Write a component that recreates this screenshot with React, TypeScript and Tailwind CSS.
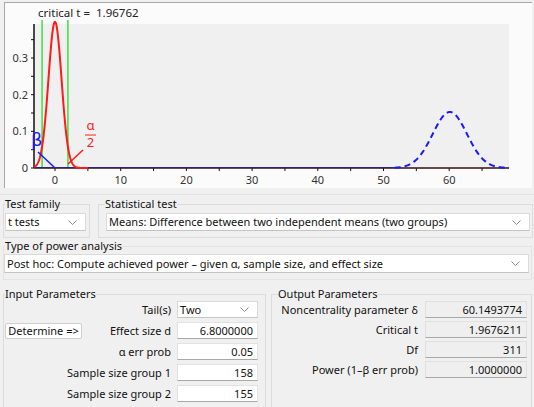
import React from 'react';

// plot mapping (page pixels)
const X = (t: number) => 55 + t * 6.57;
const Y = (p: number) => 168 - p * 366.7;

const DF = 311;
const centralPdf = (t: number) =>
  0.39894 * (1 - 1 / (4 * DF)) * Math.pow(1 + (t * t) / DF, -(DF + 1) / 2);

const ncPdf = (t: number) => {
  const m = 60.1;
  const s = 2.61;
  const z = (t - m) / s;
  return Math.exp((-z * z) / 2) / (s * 2.5066);
};

function curve(f: (t: number) => number, from: number, to: number, step = 0.05) {
  let d = '';
  for (let t = from; t <= to; t += step) {
    d += `${d ? 'L' : 'M'}${X(t).toFixed(2)},${Y(f(t)).toFixed(2)}`;
  }
  return d;
}

const redPath = curve(centralPdf, -3.2, 5);
const bluePath = curve(ncPdf, 51.7, 69.1);

const xTicks = Array.from({ length: 14 }, (_, i) => i * 5);
const yTicks = Array.from({ length: 8 }, (_, i) => i * 0.05);

function Chart() {
  return (
    <div className="ml-[4px] mt-[2px] w-[528px] h-[186px] border-l border-t border-[#a8a8a8] bg-[#fbfbfb]">
      <div className="h-[20px] pl-[33px] pt-[2px] text-[11.5px] leading-[15px] text-[#222] whitespace-pre">
        {'critical t =  1.96762'}
      </div>
      <svg width="527" height="165" viewBox="5 23 527 165" className="block overflow-visible">
        <rect x="34" y="24" width="475" height="144" fill="#f0f0f0" />

        {/* axes */}
        <line x1="34" y1="24" x2="34" y2="168" stroke="#111" strokeWidth="1.5" />
        {yTicks.map((p) => (
          <line key={p} x1="31" y1={Y(p)} x2="34" y2={Y(p)} stroke="#111" />
        ))}
        {xTicks.map((t) => (
          <line key={t} x1={X(t)} y1="168" x2={X(t)} y2="171" stroke="#111" />
        ))}
        {[0, 10, 20, 30, 40, 50, 60].map((t) => (
          <text key={t} x={X(t)} y="184" fontSize="11" fill="#333" textAnchor="middle" fontFamily="Noto Sans, sans-serif">
            {t}
          </text>
        ))}
        {[
          ['0.3', 0.3],
          ['0.2', 0.2],
          ['0.1', 0.1],
          ['0', 0],
        ].map(([l, p]) => (
          <text key={l} x="28" y={Y(p as number) + 4} fontSize="11" fill="#333" textAnchor="end" fontFamily="Noto Sans, sans-serif">
            {l}
          </text>
        ))}

        {/* critical t lines */}
        <line x1={X(-1.968)} y1="20" x2={X(-1.968)} y2="168" stroke="#22dd22" strokeWidth="1.3" />
        <line x1={X(1.968)} y1="20" x2={X(1.968)} y2="168" stroke="#22dd22" strokeWidth="1.3" />

        {/* curves */}
        <line x1="34" y1="168" x2="509" y2="168" stroke="#3a1010" strokeWidth="1.6" />
        <line x1="34" y1="167.5" x2={X(51.7)} y2="167.5" stroke="#1a1a90" strokeWidth="0.8" />
        <path d={redPath} fill="none" stroke="#ff1a1a" strokeWidth="2" />
        <path d={bluePath} fill="none" stroke="#1a1aff" strokeWidth="2" strokeDasharray="6 4" />

        {/* beta / alpha markers */}
        <line x1="38" y1="152" x2="55" y2="168" stroke="#1a1aff" strokeWidth="1.5" />
        <text x="31" y="146" fontSize="18" fill="#1a1aff" fontFamily="DejaVu Sans, sans-serif">β</text>
        <line x1="83" y1="150" x2="68" y2="164" stroke="#ff1a1a" strokeWidth="1.5" />
        <text x="90.5" y="130" fontSize="13" fill="#ff1a1a" textAnchor="middle" fontFamily="Noto Sans, sans-serif">α</text>
        <line x1="85" y1="135" x2="96" y2="135" stroke="#ff1a1a" strokeWidth="1" />
        <text x="90.5" y="147" fontSize="13" fill="#ff1a1a" textAnchor="middle" fontFamily="Noto Sans, sans-serif">2</text>
      </svg>
    </div>
  );
}

function Chevron() {
  return (
    <svg width="9" height="5" viewBox="0 0 9 5" className="shrink-0">
      <path d="M0.5 0.5 L4.5 4.5 L8.5 0.5" fill="none" stroke="#8a8a8a" strokeWidth="1" />
    </svg>
  );
}

function Select({ value, className = '' }: { value: string; className?: string }) {
  return (
    <div
      className={`flex items-center justify-between bg-white border border-[#dadada] border-b-[#c4c4c4] pl-[2px] pr-[8px] ${className}`}
    >
      <span className="whitespace-nowrap">{value}</span>
      <Chevron />
    </div>
  );
}

function InputRow({ label, value, left }: { label: string; value?: string; left?: React.ReactNode }) {
  return (
    <div className="flex items-center h-[17px]">
      {left}
      <span className="flex-1 min-w-0 text-right pr-[6px] whitespace-nowrap">{label}</span>
      {value === undefined ? (
        <Select value="Two" className="w-[81px] h-[17px] shrink-0" />
      ) : (
        <div className="w-[81px] h-[17px] shrink-0 bg-white border border-[#e2e2e2] border-b-[#a8a8a8] text-right pr-[4px] leading-[15px]">
          {value}
        </div>
      )}
    </div>
  );
}

function OutputRow({ label, value }: { label: string; value: string }) {
  return (
    <div className="flex items-center h-[17px]">
      <span className="flex-1 min-w-0 text-right pr-[7px] whitespace-nowrap">{label}</span>
      <div className="w-[102px] h-[17px] shrink-0 bg-[#efefef] border border-[#e0e0e0] border-b-[#a8a8a8] text-right pr-[4px] leading-[15px]">
        {value}
      </div>
    </div>
  );
}

export default function App() {
  return (
    <div className="w-[534px] h-[407px] overflow-hidden bg-[#f0f0f0] text-[11px] leading-[14px] text-[#111] font-['Noto_Sans',sans-serif]">
      <Chart />

      <div className="mt-[6px] h-px bg-[#e3e3e3]" />

      {/* test family / statistical test */}
      <div className="flex mt-[2px]">
        <fieldset className="ml-[3px] w-[87px] min-w-0 shrink-0 border border-[#dcdcdc] pl-[1px] pr-[3px] pb-[6px]">
          <legend>Test family</legend>
          <Select value="t tests" className="mt-[2px] h-[18px]" />
        </fieldset>
        <fieldset className="ml-[8px] w-[435px] min-w-0 shrink-0 border border-[#dcdcdc] pl-[7px] pr-[2px] pb-[6px]">
          <legend className="-ml-[1px]">Statistical test</legend>
          <Select value="Means: Difference between two independent means (two groups)" className="mt-[2px] h-[18px]" />
        </fieldset>
      </div>

      {/* type of power analysis */}
      <fieldset className="ml-[3px] mt-[1px] w-[529px] min-w-0 border border-[#e4e4e4] pr-[2px] pb-[6px]">
        <legend className="ml-[1px]">Type of power analysis</legend>
        <Select
          value="Post hoc: Compute achieved power – given α, sample size, and effect size"
          className="mt-[1px] h-[19px]"
        />
      </fieldset>

      {/* parameters */}
      <div className="flex mt-[7px]">
        <fieldset className="ml-[3px] w-[263px] min-w-0 shrink-0 h-[130px] border border-[#dcdcdc] pl-[1px] pr-[7px]">
          <legend>Input Parameters</legend>
          <div className="flex flex-col gap-[4px]">
            <InputRow label="Tail(s)" />
            <InputRow
              label="Effect size d"
              value="6.8000000"
              left={
                <div className="w-[77px] h-[16px] shrink-0 bg-white border border-[#cfcfcf] rounded-[2px] text-center leading-[14px]">
                  Determine =&gt;
                </div>
              }
            />
            <InputRow label="α err prob" value="0.05" />
            <InputRow label="Sample size group 1" value="158" />
            <InputRow label="Sample size group 2" value="155" />
          </div>
        </fieldset>
        <fieldset className="ml-[5px] w-[261px] min-w-0 shrink-0 h-[130px] border border-[#dcdcdc] pl-[1px] pr-[4px]">
          <legend className="ml-[5px]">Output Parameters</legend>
          <div className="flex flex-col gap-[3px]">
            <OutputRow label="Noncentrality parameter δ" value="60.1493774" />
            <OutputRow label="Critical t" value="1.9676211" />
            <OutputRow label="Df" value="311" />
            <OutputRow label="Power (1–β err prob)" value="1.0000000" />
          </div>
        </fieldset>
      </div>
    </div>
  );
}
